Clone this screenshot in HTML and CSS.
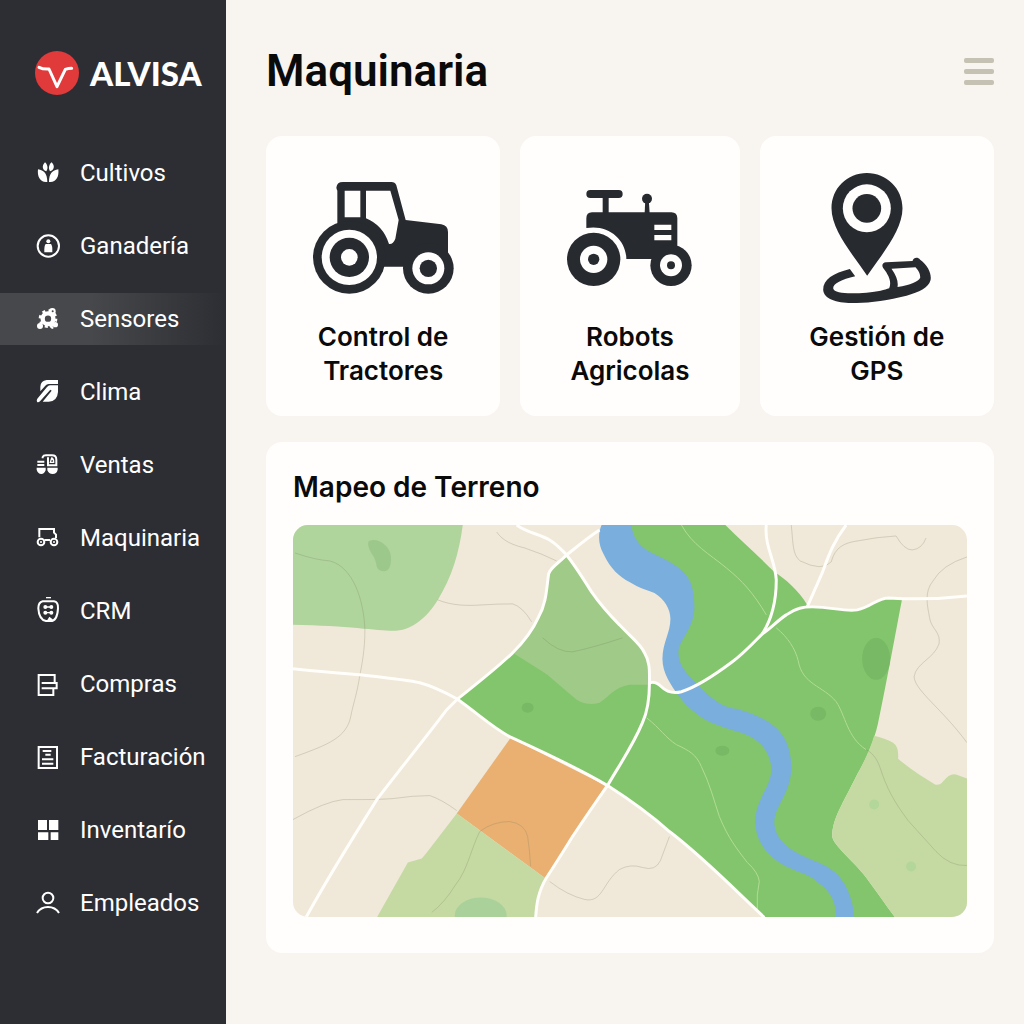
FILE: index.html
```html
<!DOCTYPE html>
<html lang="es">
<head>
    <meta charset="UTF-8">
    <meta name="viewport" content="width=device-width, initial-scale=1.0">
    <title>Alvisa - Maquinaria</title>
    <link rel="stylesheet" href="styles.css">
</head>
<body>
    <div class="app">
        <aside class="sidebar">
            <a class="brand" href="#">
                <svg class="brand-logo" viewBox="0 0 132 132">
                    <circle cx="66" cy="66" r="66" fill="#e03a3b"/>
                    <path d="M12 49Q24 55 42 54L66 107L91 55Q100 52 110 52" fill="none" stroke="#fff" stroke-width="9" stroke-linecap="round" stroke-linejoin="round"/>
                </svg>
                <span>ALVISA</span>
            </a>
            <nav class="menu">
                <a class="menu-item" href="#">
                    <svg class="menu-icon" viewBox="0 0 72 72">
                        <path class="fill" d="M27 4C34 10 38 22 31 31C20 28 16 15 27 4ZM47 4C39 10 36 22 42 31C54 28 58 15 47 4ZM6 25C24 28 34 38 34 63C14 66 3 48 6 25ZM67 25C49 28 39 38 39 63C59 66 70 48 67 25Z"/>
                    </svg>
                    <span>Cultivos</span>
                </a>
                <a class="menu-item" href="#">
                    <svg class="menu-icon" viewBox="0 0 72 72">
                        <circle cx="37" cy="36" r="32" class="line"/>
                        <circle cx="37" cy="22" r="6" class="fill"/>
                        <path class="fill" d="M29 30H45Q50 36 49 55H25Q24 36 29 30Z"/>
                    </svg>
                    <span>Ganadería</span>
                </a>
                <a class="menu-item active" href="#">
                    <svg class="menu-icon" viewBox="0 0 72 72">
                        <circle cx="36" cy="35" r="16" fill="none" stroke="#fff" stroke-width="13"/>
                        <circle cx="36" cy="35" r="24" fill="none" stroke="#fff" stroke-width="8" stroke-dasharray="9 10"/>
                        <circle cx="49" cy="13" r="10" class="fill"/>
                        <circle cx="12" cy="57" r="9" class="fill"/>
                        <circle cx="58" cy="53" r="8" class="fill"/>
                        <path d="M42 50Q42 61 52 63" class="line"/>
                        <circle cx="50" cy="13" r="3" fill="#47484b"/>
                    </svg>
                    <span>Sensores</span>
                </a>
                <a class="menu-item" href="#">
                    <svg class="menu-icon" viewBox="0 0 72 72">
                        <path class="fill" d="M66 0V12H38Q32 12 28 17L13 34V20Q14 2 32 0Z"/>
                        <path class="fill" d="M66 16V36Q64 64 38 65H20L47 32L43 29L12 64Q6 69 3 65Q1 61 4 56L33 21Q37 16 42 16Z"/>
                    </svg>
                    <span>Clima</span>
                </a>
                <a class="menu-item" href="#">
                    <svg class="menu-icon" viewBox="0 0 72 72">
                        <path d="M4 26H25M4 36H25M20 16V12Q22 7 30 7H48Q61 7 61 20V37H36V13" class="line"/>
                        <path d="M47 15Q53 17 53 28H43Z" class="line thin"/>
                        <path class="fill" d="M2 44H29V52Q25 63 16 63Q5 62 2 50ZM34 44H65V50Q62 63 50 63Q38 63 34 52Z"/>
                    </svg>
                    <span>Ventas</span>
                </a>
                <a class="menu-item" href="#">
                    <svg class="menu-icon" viewBox="0 0 72 72">
                        <path d="M10 34V9H54V20L60 26V36M25 42H42" class="line"/>
                        <circle cx="15" cy="48" r="10" class="line"/>
                        <circle cx="15" cy="48" r="3" class="fill"/>
                        <circle cx="54" cy="48" r="10" class="line"/>
                        <circle cx="54" cy="48" r="3" class="fill"/>
                    </svg>
                    <span>Maquinaria</span>
                </a>
                <a class="menu-item" href="#">
                    <svg class="menu-icon" viewBox="0 0 72 72">
                        <path d="M30 -4H45" class="line thin"/>
                        <path d="M20 7H54Q67 9 66 28Q64 66 44 66H30Q9 62 7 28Q7 10 20 7Z" class="line"/>
                        <path d="M26 24H48M26 41H48" class="line thin"/>
                        <circle cx="28" cy="24" r="6" class="fill"/>
                        <circle cx="46" cy="24" r="6" class="fill"/>
                        <circle cx="28" cy="41" r="6" class="fill"/>
                        <circle cx="46" cy="41" r="6" class="fill"/>
                        <path class="fill" d="M32 66L40 53L50 61L46 67Z"/>
                    </svg>
                    <span>CRM</span>
                </a>
                <a class="menu-item" href="#">
                    <svg class="menu-icon" viewBox="0 0 72 72">
                        <path d="M56 33V9H8V69H52V49M17 33H62V49H17" class="line"/>
                    </svg>
                    <span>Compras</span>
                </a>
                <a class="menu-item" href="#">
                    <svg class="menu-icon" viewBox="0 0 72 72">
                        <path d="M8 6H63V69H8Z" class="line"/>
                        <path d="M20 18H46M28 29H44M18 43H52M18 56H52" class="line"/>
                    </svg>
                    <span>Facturación</span>
                </a>
                <a class="menu-item" href="#">
                    <svg class="menu-icon" viewBox="0 0 72 72">
                        <path class="fill" d="M6 6H33V36H6ZM39 6H67V36H39ZM6 43H37V66H6ZM44 43H67V66H44Z"/>
                    </svg>
                    <span>Inventarío</span>
                </a>
                <a class="menu-item" href="#">
                    <svg class="menu-icon" viewBox="0 0 72 72">
                        <circle cx="36" cy="21" r="16" class="line"/>
                        <path d="M3 66Q14 48 36 48Q58 48 69 66" class="line"/>
                    </svg>
                    <span>Empleados</span>
                </a>
            </nav>
        </aside>

        <main class="content">
            <header class="page-header">
                <h1>Maquinaria</h1>
                <button class="menu-toggle" type="button" aria-label="Menú">
                    <span></span>
                    <span></span>
                    <span></span>
                </button>
            </header>

            <section class="cards">
                <a class="card" href="#">
                    <div class="card-icon">
                        <svg width="141" height="112" viewBox="0 0 423 336">
                            <path class="dark" d="M73 130V26Q66 14 76 4Q80 0 90 0H235Q246 0 250 10L278 114L385 127Q405 131 405 150V254H109V130Z"/>
                            <path class="light" d="M95 26H142V106H95ZM159 26H232L257 114L247 170Q240 188 228 186Q210 130 159 109Z"/>
                            <circle class="dark" cx="109" cy="226" r="109"/>
                            <circle class="light" cx="109" cy="226" r="83"/>
                            <circle class="dark" cx="109" cy="226" r="59"/>
                            <circle class="light" cx="109" cy="226" r="25"/>
                            <circle class="dark" cx="346" cy="259" r="76"/>
                            <circle class="light" cx="346" cy="259" r="48"/>
                            <circle class="dark" cx="346" cy="259" r="26"/>
                        </svg>
                    </div>
                    <h2>Control de<br>Tractores</h2>
                </a>
                <a class="card" href="#">
                    <div class="card-icon">
                        <svg width="125" height="96" viewBox="0 0 373 288">
                            <rect class="dark" x="57" y="0" width="109" height="24" rx="12"/>
                            <rect class="dark" x="106" y="20" width="18" height="50"/>
                            <circle class="dark" cx="239" cy="26" r="15"/>
                            <path class="dark" d="M234 26H244L247 70H232Z"/>
                            <path class="dark" d="M57 114V85Q57 67 74 67H312Q330 67 330 85V207H177C177 150 125 102 57 114Z"/>
                            <path class="light" d="M261 104H312V120H261ZM261 135H312V151H261Z"/>
                            <circle class="dark" cx="79" cy="208" r="80"/>
                            <circle class="light" cx="79" cy="208" r="41"/>
                            <circle class="dark" cx="79" cy="208" r="17"/>
                            <circle class="dark" cx="311" cy="226" r="62"/>
                            <circle class="light" cx="311" cy="226" r="33"/>
                            <circle class="dark" cx="311" cy="226" r="12"/>
                        </svg>
                    </div>
                    <h2>Robots<br>Agricolas</h2>
                </a>
                <a class="card" href="#">
                    <div class="card-icon">
                        <svg width="108" height="130" viewBox="0 0 323 390">
                            <path class="dark" d="M131 0C190 0 238 46 238 106C238 170 180 240 132 308C85 240 25 170 25 106C25 46 72 0 131 0Z"/>
                            <circle class="light" cx="131" cy="106" r="72"/>
                            <circle class="dark" cx="131" cy="106" r="43"/>
                            <path class="dark" d="M80 288L96 310C55 320 30 332 30 346C32 364 90 362 130 359C165 356 185 351 198 346C205 330 200 310 180 285C174 276 180 267 190 268L268 264C272 252 284 252 291 260C316 278 326 304 322 322C316 344 288 358 250 368C190 383 130 391 85 390C40 389 2 378 0 350C0 320 30 300 80 288ZM205 287C220 308 226 326 223 342C262 335 286 326 291 314C292 302 284 290 277 283Z" fill-rule="evenodd"/>
                        </svg>
                    </div>
                    <h2>Gestión de<br>GPS</h2>
                </a>
            </section>

            <section class="panel">
                <h2>Mapeo de Terreno</h2>
                <svg class="map" viewBox="0 0 675 393" role="img" aria-label="Mapa del terreno">
                    <rect width="675" height="393" fill="#f0e8d9"/>

                    <!-- parcelas -->
                    <path fill="#afd49c" d="M0 0H170C166 30 159 52 145 75C134 93 118 106 100 106C84 106 55 101 0 100Z"/>
                    <path fill="#82c56c" d="M325 0H433C448 15 465 30 482 47C492 53 507 66 515 80L520 82C540 82 552 87 565 85C580 82 584 73 597 73L610 74C603 110 595 155 587 193C583 215 575 232 565 250C550 280 540 295 540 312C542 322 560 335 574 353C585 368 594 381 603 393H472C440 363 410 332 377 307C360 292 340 277 315 261C285 243 252 228 217 212C200 203 184 188 164 174C180 162 200 147 220 128C227 121 238 110 246 92C254 78 254 62 256 49C258 42 264 40 274 30C285 44 290 53 299 67C308 80 318 91 327 100C340 114 348 119 352 128C358 138 357 148 357 158C362 156 366 159 369 162C374 167 381 169 389 167C376 150 374 130 385 110C398 85 392 60 372 45C345 35 330 20 325 0Z"/>
                    <path fill="#9fca87" d="M220 128C227 121 238 110 246 92C254 78 254 62 256 49C258 42 264 40 274 30C285 44 290 53 299 67C308 80 318 91 327 100C340 114 348 119 352 128C358 138 357 148 357 160L337 160C322 162 316 173 307 178C300 180 292 180 284 175L264 158Q256 150 247 145Z"/>
                    <path fill="#e9b071" d="M218 213L313 261L253 354L164 289Z"/>
                    <path fill="#c5daa3" d="M164 289L253 354C245 368 244 380 243 393H84L115 338Q122 336 129 334L134 328Z"/>
                    <path fill="#c5daa3" d="M582 211Q594 214 601 218Q607 222 606 234Q614 241 627 250L643 260Q648 261 651 257Q658 248 664 250L675 254V393H603C594 381 585 368 574 353C560 335 542 322 540 312C540 295 550 280 565 250Q577 228 582 211Z"/>

                    <!-- manchas -->
                    <path fill="#9dc88c" d="M76 16C84 12 97 20 98 31C99 42 95 48 89 46C81 44 86 38 79 29C76 24 74 18 76 16Z"/>
                    <g fill="#77b964">
                        <ellipse cx="584" cy="134" rx="14" ry="21"/>
                        <ellipse cx="526" cy="189" rx="8" ry="7"/>
                        <ellipse cx="430" cy="226" rx="7" ry="5"/>
                        <ellipse cx="235" cy="183" rx="6" ry="5"/>
                    </g>
                    <g fill="#b3d69b">
                        <circle cx="582" cy="280" r="5"/>
                        <circle cx="619" cy="342" r="5"/>
                    </g>
                    <ellipse cx="188" cy="391" rx="26" ry="18" fill="#abd19a"/>

                    <!-- curvas de nivel -->
                    <g fill="none" stroke="#7b7a5c" stroke-opacity=".25">
                        <path d="M2 28Q22 35 37 36C60 42 71 75 72 105C72 125 69 140 67 150C64 170 60 180 58 191C54 213 35 220 2 232"/>
                        <path d="M145 75C160 81 175 81 190 80Q205 79 220 79Q230 82 239 97"/>
                        <path d="M204 7C210 16 220 20 232 23Q250 29 264 36"/>
                        <path d="M250 113Q266 128 280 127Q300 123 330 113"/>
                        <path d="M499 0C501 18 500 30 508 36Q530 47 539 37C543 22 552 18 565 16Q585 12 604 11Q612 25 620 25Q630 24 634 13"/>
                        <path d="M675 32Q650 40 641 56C632 67 635 80 638 95C640 104 649 108 647 119C642 134 624 138 622 152C623 166 650 184 675 218"/>
                        <path d="M574 225C584 230 587 240 590 249C597 270 608 285 616 296L644 327Q658 342 675 341"/>
                        <path d="M0 295Q32 277 50 275C75 275 85 275 100 274Q120 271 137 271Q149 275 164 286"/>
                        <path d="M187 307C178 325 175 345 163 360Q152 378 139 388M187 307Q200 297 217 297Q232 299 235 312Q237 325 238 342"/>
                        <path d="M257 357Q275 371 292 375C310 379 310 358 327 345Q338 339 350 343Q363 347 368 336L377 312"/>
                    </g>
                    <g fill="none" stroke="#b2dc94" stroke-width="1">
                        <path d="M389 0C400 20 417 29 434 43C450 56 461 68 474 90M484 103C496 113 503 124 506 136C510 160 531 161 544 177C553 190 555 213 574 225"/>
                        <path d="M354 193C368 204 373 213 384 220C397 226 404 230 409 242C417 258 422 277 427 292C436 314 445 325 455 338Q466 348 467 357Q464 370 465 385"/>
                    </g>

                    <!-- rio -->
                    <path fill="#79aedd" d="M309 0C305 10 306 20 311 29C318 44 327 52 337 57C348 64 355 65 362 68C372 74 378 84 378 94C378 108 370 118 370 134C370 148 378 160 387 172C396 184 410 196 427 201C440 206 452 208 460 213C472 220 479 232 479 245C479 262 463 275 463 297C463 320 480 335 494 342C506 348 518 350 527 359C540 368 544 380 544 393H562C561 372 552 356 543 348C532 339 522 337 510 331C493 323 482 312 482 297C483 280 499 268 499 243C499 222 492 209 480 200C470 192 455 187 444 184C428 183 416 170 407 162C396 150 386 142 386 128C386 115 402 104 402 82C402 58 395 48 382 40C372 33 362 30 354 25C344 18 340 10 339 0Z"/>

                    <!-- caminos -->
                    <g fill="none" stroke="#fffefa" stroke-width="3" stroke-linejoin="round">
                        <path d="M0 144C25 147 45 148 67 150C95 153 115 155 127 158C142 162 153 168 164 174C184 188 200 203 217 212C252 228 285 243 315 261C340 277 360 292 377 307C410 332 440 363 472 393"/>
                        <path d="M307 5C296 12 284 22 274 30C264 40 258 42 256 49C254 62 254 78 246 92C238 110 227 121 220 128C200 147 180 162 165 174L154 185C130 217 105 247 84 275C60 313 35 353 13 393"/>
                        <path d="M224 0C235 8 247 9 257 15C264 19 269 25 274 30C285 44 290 53 299 67C308 80 318 91 327 100C340 114 348 119 352 128C358 138 357 148 357 158C357 175 355 187 350 198C340 222 327 240 315 261C300 282 290 297 280 312C270 328 262 341 254 353C245 368 244 380 243 393"/>
                        <path d="M357 158C362 156 366 159 369 162C374 167 381 169 389 167C405 162 424 149 440 137C452 128 461 118 470 109C478 104 486 95 494 90C504 83 511 82 520 82C540 82 552 87 565 85C580 82 584 73 597 73C612 74 640 75 675 71"/>
                        <path d="M474 0C472 22 483 35 484 55C484 75 479 95 470 109"/>
                        <path d="M554 0C540 18 535 35 530 48L515 82"/>
                    </g>
                </svg>
            </section>
        </main>
    </div>
</body>
</html>
```

FILE: styles.css
```css
* {
    box-sizing: border-box;
}
body {
    font-family: Inter, 'Segoe UI', sans-serif;
    margin: 0;
    background-color: #f8f4ef;
    color: #0a0a0b;
}
a {
    color: inherit;
    text-decoration: none;
}
h1, h2 {
    margin: 0;
}
.app {
    display: flex;
    min-height: 100vh;
}

/* Sidebar */
.sidebar {
    width: 226px;
    flex-shrink: 0;
    padding-top: 51px;
    background-color: #2d2e33;
    color: #fff;
}
.brand {
    display: flex;
    align-items: center;
    gap: 11px;
    height: 44px;
    padding-left: 35px;
    font-family: Lato, sans-serif;
    font-size: 33px;
    font-weight: 900;
}
.brand-logo {
    width: 44px;
    height: 44px;
}
.menu {
    display: flex;
    flex-direction: column;
    gap: 21px;
    margin-top: 52px;
}
.menu-item {
    display: flex;
    align-items: center;
    gap: 20px;
    height: 52px;
    padding-left: 36px;
    font-family: Roboto, sans-serif;
    font-size: 24px;
}
.menu-item.active {
    background: linear-gradient(90deg, #47484b 0%, #47484b 40%, #2d2e33 100%);
}
.menu-icon {
    width: 24px;
    height: 24px;
    flex-shrink: 0;
    overflow: visible;
}
.menu-icon .fill {
    fill: #fff;
}
.menu-icon .line {
    fill: none;
    stroke: #fff;
    stroke-width: 6;
}
.menu-icon .thin {
    stroke-width: 4;
}

/* Content */
.content {
    flex: 1;
    min-width: 0;
    padding: 43px 30px 70px 40px;
}
.page-header {
    display: flex;
    align-items: center;
    justify-content: space-between;
    height: 56px;
    margin-bottom: 37px;
}
.page-header h1 {
    font-family: Roboto, sans-serif;
    font-size: 44px;
    font-weight: 600;
}
.menu-toggle {
    display: flex;
    flex-direction: column;
    gap: 6px;
    padding: 0;
    border: none;
    background: none;
    cursor: pointer;
}
.menu-toggle span {
    width: 30px;
    height: 5px;
    border-radius: 2px;
    background-color: #c5c1b3;
}

.cards {
    display: grid;
    grid-template-columns: 234fr 219fr 234fr;
    gap: 20px;
    margin-bottom: 26px;
}
.card {
    padding: 36px 20px 28px;
    border-radius: 16px;
    background-color: #fffefd;
    text-align: center;
}
.card-icon {
    display: flex;
    align-items: center;
    justify-content: center;
    height: 132px;
    margin-bottom: 16px;
}
.card h2, .panel h2 {
    font-size: 26px;
    font-weight: 600;
    line-height: 34px;
}
.dark {
    fill: #272a2f;
}
.light {
    fill: #fffefd;
}

.panel {
    padding: 28px 27px 36px;
    border-radius: 16px;
    background-color: #fffefd;
}
.panel h2 {
    font-size: 28px;
    margin-bottom: 21px;
}
.map {
    display: block;
    width: 100%;
    height: auto;
    border-radius: 15px;
}
```
